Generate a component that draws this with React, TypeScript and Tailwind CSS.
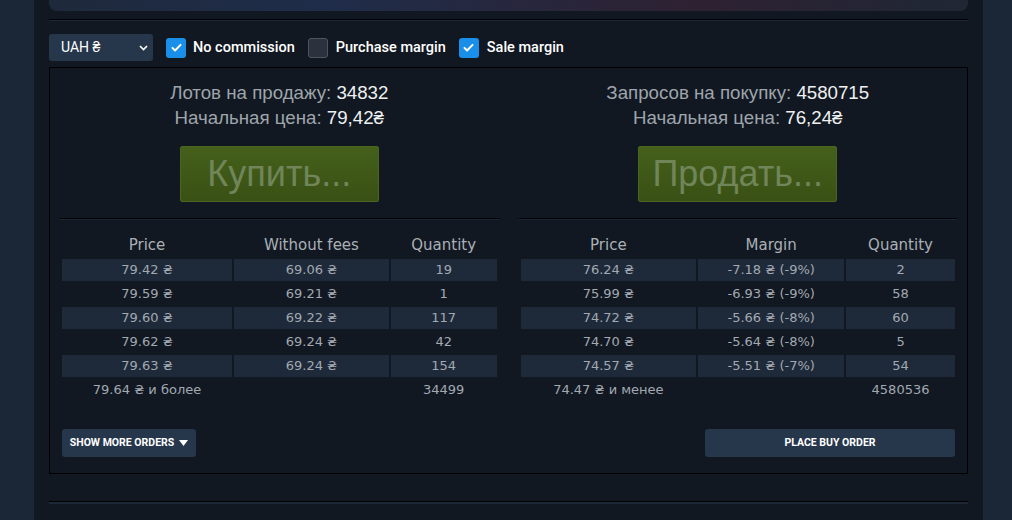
import React from "react";

const UAH = "\u20B4";

function Check({ checked }: { checked: boolean }) {
  return checked ? (
    <span className="flex h-[20px] w-[20px] items-center justify-center rounded-[3px] bg-[#1a8fea]">
      <svg width="13" height="13" viewBox="0 0 16 16" fill="none">
        <path d="M3 8.5l3.2 3.2L13 4.8" stroke="white" strokeWidth="2.4" strokeLinecap="round" strokeLinejoin="round" />
      </svg>
    </span>
  ) : (
    <span className="h-[20px] w-[20px] rounded-[3px] border border-[#4b5563] bg-[#2b323d]" />
  );
}

type Row = [string, string, string];

function OrderTable({ head, rows, last, widths }: { head: Row; rows: Row[]; last: Row; widths: [number, number, number] }) {
  return (
    <table
      className="mt-[11px] w-full border-separate border-spacing-[2px] text-center"
      style={{ fontFamily: '"DejaVu Sans", Verdana, sans-serif' }}
    >
      <colgroup>
        <col style={{ width: widths[0] }} />
        <col style={{ width: widths[1] }} />
        <col style={{ width: widths[2] }} />
      </colgroup>
      <thead>
        <tr className="h-[24px] text-[15px] text-[#aab0b7]">
          {head.map((h) => (
            <th key={h} className="p-0 font-normal">{h}</th>
          ))}
        </tr>
      </thead>
      <tbody>
        {rows.map((r, i) => (
          <tr key={i} className="h-[22px] text-[13px] text-[#a2a9b1]">
            {r.map((c, j) => (
              <td key={j} className={`p-0 ${i % 2 === 0 ? "bg-[#1e2a3a]" : ""}`}>{c}</td>
            ))}
          </tr>
        ))}
        <tr className="h-[22px] text-[13px] text-[#a2a9b1]">
          {last.map((c, j) => (
            <td key={j} className="p-0">{c}</td>
          ))}
        </tr>
      </tbody>
    </table>
  );
}

function Divider() {
  return (
    <div>
      <div className="h-[1px] bg-black" />
      <div className="h-[1px] bg-[#1c2634]" />
    </div>
  );
}

function Side({ label, count, price, btn }: { label: string; count: string; price: string; btn: string }) {
  return (
    <div className="flex flex-col items-center" style={{ fontFamily: '"Liberation Sans", Arial, sans-serif' }}>
      <div className="text-[18.7px] leading-[25px] text-[#9fa5ac]">
        {label} <span className="text-[#eef0f2]">{count}</span>
      </div>
      <div className="text-[18.7px] leading-[25px] text-[#9fa5ac]">
        Начальная цена: <span className="text-[#eef0f2]">{price}</span>
      </div>
      <div className="mt-[16px] flex h-[56px] w-[199px] items-center justify-center rounded-[2px] border border-[#4a6520] bg-[linear-gradient(to_bottom,#44601a,#3a5015)] text-[36px] leading-none text-[#70855a]">
        {btn}
      </div>
    </div>
  );
}

export default function App() {
  const leftRows: Row[] = [
    [`79.42 ${UAH}`, `69.06 ${UAH}`, "19"],
    [`79.59 ${UAH}`, `69.21 ${UAH}`, "1"],
    [`79.60 ${UAH}`, `69.22 ${UAH}`, "117"],
    [`79.62 ${UAH}`, `69.24 ${UAH}`, "42"],
    [`79.63 ${UAH}`, `69.24 ${UAH}`, "154"],
  ];
  const rightRows: Row[] = [
    [`76.24 ${UAH}`, `-7.18 ${UAH} (-9%)`, "2"],
    [`75.99 ${UAH}`, `-6.93 ${UAH} (-9%)`, "58"],
    [`74.72 ${UAH}`, `-5.66 ${UAH} (-8%)`, "60"],
    [`74.70 ${UAH}`, `-5.64 ${UAH} (-8%)`, "5"],
    [`74.57 ${UAH}`, `-5.51 ${UAH} (-7%)`, "54"],
  ];

  return (
    <div className="flex h-[520px] w-[1012px] overflow-hidden bg-[#1b2636]" style={{ fontFamily: "Roboto, sans-serif" }}>
      <div className="w-[34px] shrink-0" />
      <div className="w-[949px] shrink-0 bg-[#121822] px-[15px]">
        <div className="h-[11px] rounded-b-[8px] bg-[linear-gradient(to_right,#1e293b,#1f2d4a_30%,#2a2438_60%,#2e2132_70%,#1f2735)]" />
        <div className="mt-[8px]">
          <Divider />
        </div>

        <div className="mt-[13px] flex h-[27px] items-center">
          <div className="flex h-[27px] w-[104px] items-center justify-between rounded-[3px] bg-[#26364b] pl-[12px] pr-[5px] text-[14px] text-white">
            <span>UAH {UAH}</span>
            <svg width="9" height="6" viewBox="0 0 9 6" fill="none">
              <path d="M1 1l3.5 3.5L8 1" stroke="white" strokeWidth="1.6" />
            </svg>
          </div>
          <div className="ml-[13px] flex items-center gap-[7px]">
            <Check checked />
            <span className="text-[14.5px] font-medium text-white">No commission</span>
          </div>
          <div className="ml-[13px] flex items-center gap-[8px]">
            <Check checked={false} />
            <span className="text-[14.5px] font-medium text-white">Purchase margin</span>
          </div>
          <div className="ml-[13px] flex items-center gap-[8px]">
            <Check checked />
            <span className="text-[14.5px] font-medium text-white">Sale margin</span>
          </div>
        </div>

        <div className="mt-[6px] h-[407px] border border-black bg-[#111821] pt-[12px]">
          <div className="grid grid-cols-2 gap-[20px] px-[10px]">
            <div>
              <Side label="Лотов на продажу:" count="34832" price={`79,42${UAH}`} btn="Купить..." />
              <div className="mt-[16px]">
                <Divider />
              </div>
              <OrderTable
                head={["Price", "Without fees", "Quantity"]}
                rows={leftRows}
                last={[`79.64 ${UAH} и более`, "", "34499"]}
                widths={[169, 154, 105]}
              />
            </div>
            <div>
              <Side label="Запросов на покупку:" count="4580715" price={`76,24${UAH}`} btn="Продать..." />
              <div className="mt-[16px]">
                <Divider />
              </div>
              <OrderTable
                head={["Price", "Margin", "Quantity"]}
                rows={rightRows}
                last={[`74.47 ${UAH} и менее`, "", "4580536"]}
                widths={[176, 146, 109]}
              />
            </div>
          </div>
          <div className="mt-[26px] flex justify-between px-[12px]">
            <div className="flex h-[28px] w-[134px] items-center justify-center gap-[5px] rounded-[3px] bg-[#26364b] text-[10.5px] font-bold text-white">
              SHOW MORE ORDERS
              <svg width="9" height="6" viewBox="0 0 9 6">
                <path d="M0 0h9L4.5 6z" fill="white" />
              </svg>
            </div>
            <div className="flex h-[28px] w-[250px] items-center justify-center rounded-[3px] bg-[#26364b] text-[10.5px] font-bold text-white">
              PLACE BUY ORDER
            </div>
          </div>
        </div>

        <div className="mt-[27px]">
          <div className="h-[1px] bg-black" />
          <div className="h-[2px] bg-[#1c2838]" />
        </div>
      </div>
      <div className="flex-1" />
    </div>
  );
}
